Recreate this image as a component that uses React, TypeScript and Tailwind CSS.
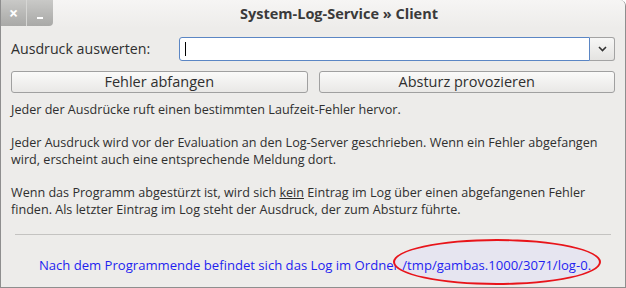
import React from 'react';

const font = { fontFamily: '"Open Sans", "DejaVu Sans", sans-serif' };

export default function App() {
  return (
    <div
      className="w-[626px] h-[288px] bg-[#edecea] border-x border-b border-[#8e8e8e] rounded-tr-[6px] flex flex-col text-[#2f2f2f] overflow-hidden"
      style={font}
    >
      {/* Title bar */}
      <div className="h-[28px] flex items-start shrink-0 bg-gradient-to-b from-[#f6f5f4] to-[#edecea]">
        <div className="flex h-[26px] shrink-0">
          <div className="w-[26px] h-full bg-gradient-to-b from-[#c9c9c7] to-[#a9a9a7] flex items-center justify-center text-white font-bold text-[16px] leading-none border-r border-[#d6d6d4]">
            ×
          </div>
          <div className="w-[26px] h-full bg-gradient-to-b from-[#c9c9c7] to-[#a9a9a7] rounded-br-[4px] flex items-end justify-center pb-[7px]">
            <div className="w-[6px] h-[2px] bg-white" />
          </div>
        </div>
        <div className="flex-1 pt-[7px] text-center text-[14.5px] font-bold leading-none text-[#3a3a3a]">
          System-Log-Service » Client
        </div>
      </div>

      {/* Expression row */}
      <div className="flex items-center px-[10px] mt-[9px] h-[24px]">
        <span className="w-[168px] text-[14.2px]">Ausdruck auswerten:</span>
        <div className="flex-1 flex h-[24px]">
          <div className="flex-1 bg-white border border-[#5b86c4] rounded-l-[3px] flex items-center pl-[5px]">
            <div className="w-px h-[14px] bg-black" />
          </div>
          <div className="w-[25px] border border-l-0 border-[#a3a3a3] rounded-r-[3px] bg-gradient-to-b from-[#f7f7f6] to-[#e4e3e1] flex items-center justify-center">
            <svg width="9" height="6" viewBox="0 0 9 6">
              <path d="M1 1 L4.5 4.5 L8 1" stroke="#333" strokeWidth="1.6" fill="none" />
            </svg>
          </div>
        </div>
      </div>

      {/* Buttons */}
      <div className="flex gap-[11px] px-[10px] mt-[10px]">
        <button className="flex-1 h-[22px] border border-[#a0a0a0] rounded-[3px] bg-gradient-to-b from-[#fafaf9] to-[#e9e8e6] text-[14.5px] leading-none text-[#2f2f2f]">
          Fehler abfangen
        </button>
        <button className="flex-1 h-[22px] border border-[#a0a0a0] rounded-[3px] bg-gradient-to-b from-[#fafaf9] to-[#e9e8e6] text-[14.5px] leading-none text-[#2f2f2f]">
          Absturz provozieren
        </button>
      </div>

      {/* Description */}
      <div className="px-[10px] mt-[8px] text-[12.6px] leading-[17px] flex flex-col gap-[16px] whitespace-nowrap">
        <p>Jeder der Ausdrücke ruft einen bestimmten Laufzeit-Fehler hervor.</p>
        <p>
          Jeder Ausdruck wird vor der Evaluation an den Log-Server geschrieben. Wenn ein Fehler abgefangen
          <br />
          wird, erscheint auch eine entsprechende Meldung dort.
        </p>
        <p>
          Wenn das Programm abgestürzt ist, wird sich <span className="underline">kein</span> Eintrag im Log über einen abgefangenen Fehler
          <br />
          finden. Als letzter Eintrag im Log steht der Ausdruck, der zum Absturz führte.
        </p>
      </div>

      {/* Separator */}
      <div className="mx-[14px] mt-[16px] h-px bg-[#c4c3c1]" />

      {/* Footer */}
      <div className="flex-1 flex items-center justify-center pt-[10px] pl-[4px]">
        <span className="text-[13.1px] text-[#1f1ff0] whitespace-nowrap">
          Nach dem Programmende befindet sich das Log im Ordner{' '}
          <span className="relative">
            <span className="absolute left-[-9px] right-[-10px] top-[-17px] bottom-[-11px] rounded-[50%] border-2 border-[#e8141a] bg-[#e6e5f0]" />
            <span className="relative">/tmp/gambas.1000/3071/log-0.</span>
          </span>
        </span>
      </div>
    </div>
  );
}
